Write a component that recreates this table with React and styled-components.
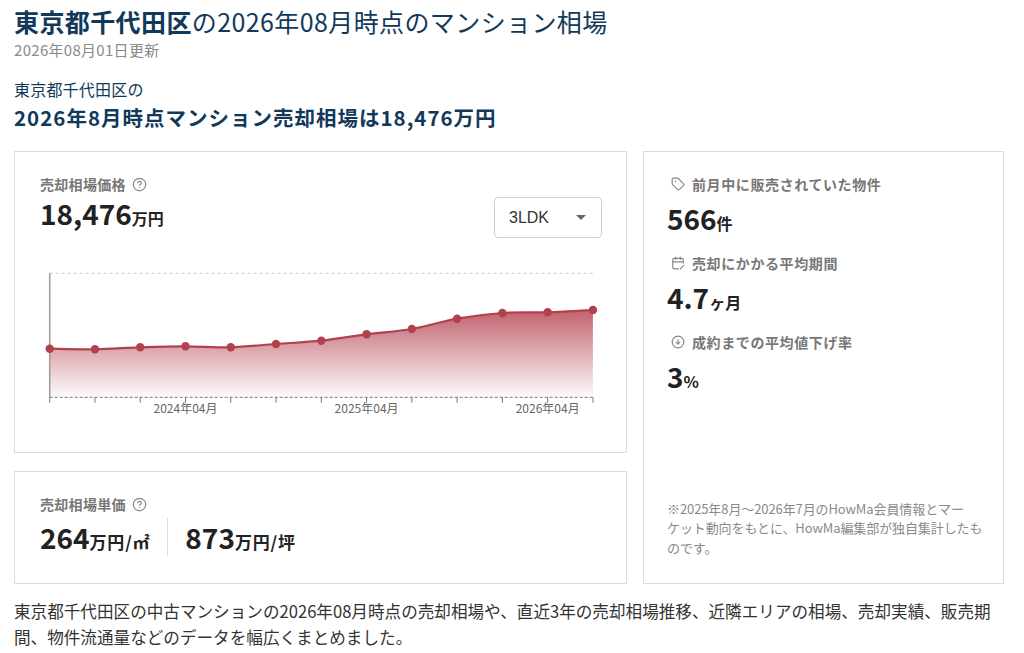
import React from "react";
import styled, { createGlobalStyle } from "styled-components";

const GlobalStyle = createGlobalStyle`
  body {
    margin: 0;
    background: #ffffff;
    font-family: "Noto Sans CJK JP", "Noto Sans", sans-serif;
    color: #222;
  }
`;

const Page = styled.div`
  width: 996px;
  padding: 4px 14px 0 14px;
`;

const Title = styled.h1`
  margin: 0;
  font-size: 25px;
  line-height: 34px;
  font-weight: 400;
  color: #12395a;
  letter-spacing: 0.4px;
  white-space: nowrap;

  strong {
    font-weight: 700;
  }
`;

const Updated = styled.div`
  margin-top: 2px;
  font-size: 15px;
  line-height: 20px;
  color: #8a8a8a;
  letter-spacing: 0.3px;
`;

const Lead = styled.div`
  margin-top: 17px;
  font-size: 16px;
  line-height: 24px;
  color: #12395a;
  letter-spacing: 0.2px;
`;

const Headline = styled.div`
  margin-top: 1px;
  font-size: 20.5px;
  line-height: 30px;
  font-weight: 700;
  color: #12395a;
  letter-spacing: 1px;
  white-space: nowrap;
`;

const Grid = styled.div`
  margin-top: 19px;
  display: grid;
  grid-template-columns: 613px 361px;
  grid-template-rows: auto auto;
  column-gap: 16px;
  row-gap: 18px;
`;

const Card = styled.section`
  border: 1px solid #dcdcdc;
  background: #fff;
  box-sizing: border-box;
`;

const PriceCard = styled(Card)`
  padding: 22px 24px 30px 25px;
`;

const UnitCard = styled(Card)`
  padding: 22px 24px 27px 25px;
`;

const StatsCard = styled(Card)`
  grid-column: 2;
  grid-row: 1 / span 2;
  padding: 22px 16px 26px 23px;
  display: flex;
  flex-direction: column;
`;

const CardHead = styled.div`
  display: flex;
  justify-content: space-between;
  align-items: flex-start;
`;

const Label = styled.div`
  display: flex;
  align-items: center;
  gap: ${(p) => (p.$lead ? "7px" : "6px")};
  padding-left: ${(p) => (p.$lead ? "4px" : "0")};
  font-size: 14px;
  line-height: 20px;
  font-weight: 700;
  color: #777;
  letter-spacing: ${(p) => (p.$lead ? "0.6px" : "0.3px")};

  svg {
    flex: none;
  }
`;

const Value = styled.div`
  height: 38px;
  display: flex;
  align-items: baseline;
  font-size: 28px;
  line-height: 38px;
  font-weight: 700;
  color: #222;
  white-space: nowrap;

  small {
    font-size: ${(p) => (p.$unit ? "17px" : "16px")};
    letter-spacing: ${(p) => (p.$unit ? "0.8px" : "0")};
    line-height: 1;
    font-weight: 700;
  }
`;

const Select = styled.div`
  margin-top: 23px;
  width: 108px;
  height: 41px;
  box-sizing: border-box;
  border: 1px solid #cfcfcf;
  border-radius: 4px;
  display: flex;
  align-items: center;
  justify-content: space-between;
  padding: 0 15px 0 14px;
  font-size: 16px;
  color: #333;
  font-family: "Liberation Sans", "Noto Sans", sans-serif;
`;

const Caret = styled.span`
  width: 0;
  height: 0;
  border-left: 5px solid transparent;
  border-right: 5px solid transparent;
  border-top: 5px solid #666;
`;

const ChartBox = styled.div`
  margin-top: 24px;
  height: 160px;

  svg {
    display: block;
  }
`;

const UnitRow = styled.div`
  margin-top: 4px;
  display: flex;
  align-items: stretch;
`;

const Divider = styled.div`
  width: 1px;
  background: #dedede;
  margin: 0 17px;
`;

const Stat = styled.div`
  & + & {
    margin-top: 16px;
  }
`;

const StatValue = styled(Value)`
  margin-top: 5px;
`;

const Note = styled.p`
  margin: auto 0 0 0;
  font-size: 13px;
  line-height: 19.5px;
  color: #8a8a8a;
  letter-spacing: -0.1px;
  white-space: nowrap;
`;

const Summary = styled.p`
  margin: 14px 0 0 0;
  font-size: 16.6px;
  line-height: 26px;
  color: #333;
`;

const HelpIcon = () => (
  <svg width="15" height="15" viewBox="0 0 24 24" fill="none" stroke="#888" strokeWidth="2" strokeLinecap="round" strokeLinejoin="round">
    <circle cx="12" cy="12" r="10" />
    <path d="M9.09 9a3 3 0 0 1 5.83 1c0 2-3 3-3 3" />
    <path d="M12 17h.01" />
  </svg>
);

const TagIcon = () => (
  <svg width="14" height="14" viewBox="0 0 24 24" fill="none" stroke="#888" strokeWidth="2" strokeLinecap="round" strokeLinejoin="round">
    <path d="M12.586 2.586A2 2 0 0 0 11.172 2H4a2 2 0 0 0-2 2v7.172a2 2 0 0 0 .586 1.414l8.704 8.704a2.426 2.426 0 0 0 3.42 0l6.58-6.58a2.426 2.426 0 0 0 0-3.42z" />
    <circle cx="7.5" cy="7.5" r=".5" fill="#888" />
  </svg>
);

const CalendarIcon = () => (
  <svg width="14" height="14" viewBox="0 0 24 24" fill="none" stroke="#888" strokeWidth="2" strokeLinecap="round" strokeLinejoin="round">
    <path d="M8 2v4" />
    <path d="M16 2v4" />
    <path d="M21 12V6a2 2 0 0 0-2-2H5a2 2 0 0 0-2 2v14a2 2 0 0 0 2 2h8" />
    <path d="M3 10h18" />
    <path d="M16 22l6-6" />
  </svg>
);

const DownIcon = () => (
  <svg width="14" height="14" viewBox="0 0 24 24" fill="none" stroke="#888" strokeWidth="2" strokeLinecap="round" strokeLinejoin="round">
    <circle cx="12" cy="12" r="10" />
    <path d="M12 8v7" />
    <path d="M9 12.5l3 3 3-3" />
  </svg>
);

// y values of the monthly price points, in chart pixels
const series = [86.7, 87.3, 85.3, 84.3, 85.3, 82, 78.7, 72.3, 67, 56.7, 51, 50.3, 48];
const X0 = 9.7;
const STEP = 45.27;
const TOP = 11.3;
const BASE = 135.3;
const RED = "#b3404d";

const points = series.map((y, i) => [X0 + i * STEP, y]);

function curve(pts) {
  let d = `M${pts[0][0]},${pts[0][1]}`;
  for (let i = 0; i < pts.length - 1; i++) {
    const p0 = pts[i - 1] || pts[i];
    const p1 = pts[i];
    const p2 = pts[i + 1];
    const p3 = pts[i + 2] || p2;
    const c1x = p1[0] + (p2[0] - p0[0]) / 6;
    const c1y = p1[1] + (p2[1] - p0[1]) / 6;
    const c2x = p2[0] - (p3[0] - p1[0]) / 6;
    const c2y = p2[1] - (p3[1] - p1[1]) / 6;
    d += ` C${c1x.toFixed(1)},${c1y.toFixed(1)} ${c2x.toFixed(1)},${c2y.toFixed(1)} ${p2[0].toFixed(1)},${p2[1]}`;
  }
  return d;
}

const labels = [
  { i: 3, text: "2024年04月" },
  { i: 7, text: "2025年04月" },
  { i: 11, text: "2026年04月" },
];

const PriceChart = () => {
  const line = curve(points);
  const last = points[points.length - 1];
  const area = `${line} L${last[0]},${BASE} L${X0},${BASE} Z`;
  return (
    <svg width="561" height="160" viewBox="0 0 561 160">
      <defs>
        <linearGradient id="fade" x1="0" y1="48" x2="0" y2={BASE} gradientUnits="userSpaceOnUse">
          <stop offset="0" stopColor={RED} stopOpacity="0.82" />
          <stop offset="1" stopColor={RED} stopOpacity="0.02" />
        </linearGradient>
      </defs>
      <line x1={X0} y1={TOP} x2={last[0]} y2={TOP} stroke="#c8c8c8" strokeDasharray="3 3" />
      <path d={area} fill="url(#fade)" />
      <line x1={X0} y1={TOP} x2={X0} y2={BASE} stroke="#9a9a9a" strokeWidth="1.5" />
      <line x1={X0} y1={BASE} x2={last[0]} y2={BASE} stroke="#777" strokeDasharray="3 2" />
      {points.map(([x], i) => (
        <line key={i} x1={x} y1={BASE} x2={x} y2={BASE + 5.5} stroke="#777" />
      ))}
      <path d={line} fill="none" stroke={RED} strokeWidth="2.2" />
      {points.map(([x, y], i) => (
        <circle key={i} cx={x} cy={y} r="4.2" fill={RED} />
      ))}
      {labels.map((l) => (
        <text
          key={l.text}
          x={points[l.i][0]}
          y="151"
          textAnchor="middle"
          fontSize="12"
          fill="#666"
          fontFamily='"Noto Sans CJK JP", sans-serif'
        >
          {l.text}
        </text>
      ))}
    </svg>
  );
};

const App = () => {
  return (
    <Page>
      <GlobalStyle />
      <Title>
        <strong>東京都千代田区</strong>の2026年08月時点のマンション相場
      </Title>
      <Updated>2026年08月01日更新</Updated>
      <Lead>東京都千代田区の</Lead>
      <Headline>2026年8月時点マンション売却相場は18,476万円</Headline>

      <Grid>
        <PriceCard>
          <CardHead>
            <div>
              <Label>
                売却相場価格 <HelpIcon />
              </Label>
              <Value>
                18,476<small>万円</small>
              </Value>
            </div>
            <Select>
              3LDK <Caret />
            </Select>
          </CardHead>
          <ChartBox>
            <PriceChart />
          </ChartBox>
        </PriceCard>

        <StatsCard>
          <Stat>
            <Label $lead>
              <TagIcon />
              前月中に販売されていた物件
            </Label>
            <StatValue>
              566<small>件</small>
            </StatValue>
          </Stat>
          <Stat>
            <Label $lead>
              <CalendarIcon />
              売却にかかる平均期間
            </Label>
            <StatValue>
              4.7<small>ヶ月</small>
            </StatValue>
          </Stat>
          <Stat>
            <Label $lead>
              <DownIcon />
              成約までの平均値下げ率
            </Label>
            <StatValue>
              3<small>%</small>
            </StatValue>
          </Stat>
          <Note>
            ※2025年8月〜2026年7月のHowMa会員情報とマー
            <br />
            ケット動向をもとに、HowMa編集部が独自集計したも
            <br />
            のです。
          </Note>
        </StatsCard>

        <UnitCard>
          <Label>
            売却相場単価 <HelpIcon />
          </Label>
          <UnitRow>
            <Value $unit>
              264<small>万円/㎡</small>
            </Value>
            <Divider />
            <Value $unit>
              873<small>万円/坪</small>
            </Value>
          </UnitRow>
        </UnitCard>
      </Grid>

      <Summary>
        東京都千代田区の中古マンションの2026年08月時点の売却相場や、直近3年の売却相場推移、近隣エリアの相場、売却実績、販売期間、物件流通量などのデータを幅広くまとめました。
      </Summary>
    </Page>
  );
};

export default App;
